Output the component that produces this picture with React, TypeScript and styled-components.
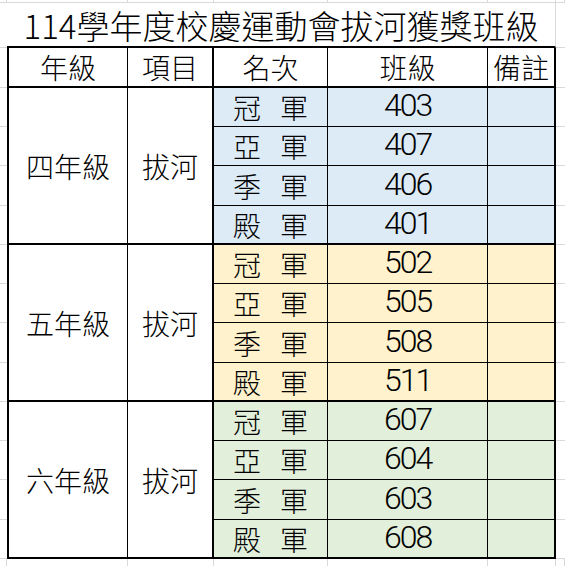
import styled, { createGlobalStyle } from "styled-components";

/* --- Sheet data --- */

type Tone = "blue" | "gold" | "green";

const groups: { grade: string; item: string; tone: Tone; rows: [string, string][] }[] = [
  {
    grade: "四年級",
    item: "拔河",
    tone: "blue",
    rows: [["冠 軍", "403"], ["亞 軍", "407"], ["季 軍", "406"], ["殿 軍", "401"]],
  },
  {
    grade: "五年級",
    item: "拔河",
    tone: "gold",
    rows: [["冠 軍", "502"], ["亞 軍", "505"], ["季 軍", "508"], ["殿 軍", "511"]],
  },
  {
    grade: "六年級",
    item: "拔河",
    tone: "green",
    rows: [["冠 軍", "607"], ["亞 軍", "604"], ["季 軍", "603"], ["殿 軍", "608"]],
  },
];

const fills: Record<Tone, string> = {
  blue: "#ddebf7",
  gold: "#fff2cc",
  green: "#e2efda",
};

const GRID = "#d9d9d9";
const INK = "#000";

/* --- Styled Components --- */

const GlobalStyle = createGlobalStyle`
  html, body {
    margin: 0;
    padding: 0;
    background: #fff;
  }
  body {
    font-family: "Noto Sans CJK TC", "Noto Sans", sans-serif;
    color: #000;
  }
`;

const Sheet = styled.div`
  display: grid;
  grid-template-columns: 7px 121px 86px 114px 160px 68px 1fr;
  grid-template-rows: 3px 45px 40px repeat(3, 39px 39px 40px 39px) 1fr;
  width: 565px;
  height: 566px;
  overflow: hidden;
`;

/* plain spreadsheet cell outside the bordered table */
const Blank = styled.div<{ $right?: boolean; $bottom?: boolean }>`
  box-sizing: border-box;
  border-right: ${(p) => (p.$right ? `1px solid ${GRID}` : "none")};
  border-bottom: ${(p) => (p.$bottom === false ? "none" : `1px solid ${GRID}`)};
`;

const Title = styled.div`
  grid-column: 2 / 7;
  box-sizing: border-box;
  display: flex;
  align-items: center;
  justify-content: center;
  border-bottom: 2px solid ${INK};
  border-right: 1px solid ${GRID};
  font-size: 33px;
  font-weight: 300;
  line-height: 1;
  padding-top: 1px;
`;

const Cell = styled.div<{ $first?: boolean; $thickRight?: boolean; $thickBottom?: boolean; $fill?: string }>`
  box-sizing: border-box;
  display: flex;
  align-items: center;
  justify-content: center;
  background: ${(p) => p.$fill ?? "#fff"};
  border-left: ${(p) => (p.$first ? `2px solid ${INK}` : "none")};
  border-right: ${(p) => (p.$thickRight ? 2 : 1)}px solid ${INK};
  border-bottom: ${(p) => (p.$thickBottom ? 2 : 1)}px solid ${INK};
  font-size: 28px;
  font-weight: 300;
  line-height: 1;
  white-space: pre;
`;

const Merged = styled(Cell)`
  grid-row: span 4;
`;

const Rank = styled(Cell)`
  word-spacing: 13px;
`;

const ClassNo = styled(Cell)`
  font-family: Roboto, "Noto Sans", sans-serif;
  font-size: 32px;
  font-weight: 300;
  letter-spacing: -2px;
  padding-bottom: 4px;
`;

/* --- Component --- */

export default function App() {
  const cols = 7;

  return (
    <>
      <GlobalStyle />
      <Sheet>
        {/* partial row above the title */}
        {Array.from({ length: cols }, (_, i) => (
          <Blank key={`top-${i}`} $right />
        ))}

        {/* title row */}
        <Blank />
        <Title>114學年度校慶運動會拔河獲獎班級</Title>
        <Blank />

        {/* header row */}
        <Blank />
        <Cell $first $thickBottom>年級</Cell>
        <Cell $thickRight $thickBottom>項目</Cell>
        <Cell $thickBottom>名次</Cell>
        <Cell $thickBottom>班級</Cell>
        <Cell $thickRight $thickBottom>備註</Cell>
        <Blank />

        {groups.map((g) =>
          g.rows.map(([rank, cls], i) => {
            const last = i === g.rows.length - 1;
            const fill = fills[g.tone];
            return [
              <Blank key={`${cls}-l`} />,
              i === 0 && (
                <Merged key={`${cls}-g`} $first $thickBottom>
                  {g.grade}
                </Merged>
              ),
              i === 0 && (
                <Merged key={`${cls}-i`} $thickRight $thickBottom>
                  {g.item}
                </Merged>
              ),
              <Rank key={`${cls}-r`} $fill={fill} $thickBottom={last}>
                {rank}
              </Rank>,
              <ClassNo key={`${cls}-c`} $fill={fill} $thickBottom={last}>
                {cls}
              </ClassNo>,
              <Cell key={`${cls}-n`} $fill={fill} $thickRight $thickBottom={last} />,
              <Blank key={`${cls}-e`} />,
            ];
          })
        )}

        {/* partial row below the table */}
        {Array.from({ length: cols }, (_, i) => (
          <Blank key={`bot-${i}`} $right $bottom={false} />
        ))}
      </Sheet>
    </>
  );
}
